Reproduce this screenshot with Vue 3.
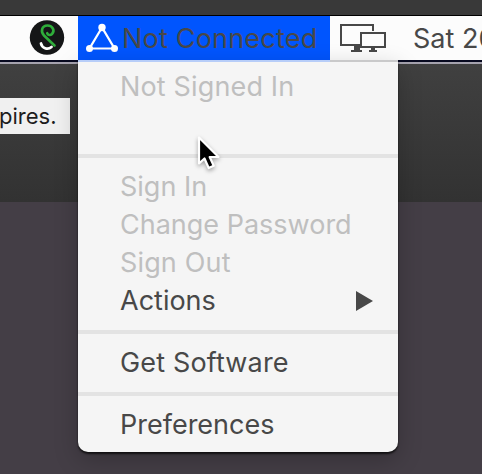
<script setup>
const groups = [
  [
    { label: 'Not Signed In', cls: 'not-signed', disabled: true },
    { label: '', cls: 'blank', disabled: true },
  ],
  [
    { label: 'Sign In', cls: 'sign-in', disabled: true },
    { label: 'Change Password', cls: 'change', disabled: true },
    { label: 'Sign Out', cls: 'sign-out', disabled: true },
    { label: 'Actions', cls: 'actions', submenu: true },
  ],
  [{ label: 'Get Software', cls: 'software' }],
  [{ label: 'Preferences', cls: 'prefs' }],
]
</script>

<template>
  <div class="screen">
    <header class="menubar">
      <svg class="snake" width="36" height="36" viewBox="0 0 36 36">
        <circle cx="18" cy="17.5" r="17.2" fill="#151617" />
        <path d="M25.500 25.500 15 15.500C11.500 12 12.500 5.500 18.500 5.500c5.500 0 7.500 5.500 4.500 8.500-1.700 1.600-4 1.300-4.800-.8" fill="none" stroke="#2fae3a" stroke-width="2.600" stroke-linecap="round" stroke-linejoin="round" />
        <path d="M12 23.500c1 4.500 6.500 7 10.500 3.500" fill="none" stroke="#fff" stroke-width="2.800" stroke-linecap="round" />
      </svg>
      <div class="status">
        <svg class="tri" width="34" height="32" viewBox="0 0 34 32">
          <path d="M17 5.500 4.500 26.500h25z" fill="none" stroke="#fff" stroke-width="2.200" />
          <circle cx="17" cy="5.500" r="3.700" fill="#fff" />
          <circle cx="4.500" cy="26.500" r="3.500" fill="#fff" />
          <circle cx="29.500" cy="26.500" r="3.500" fill="#fff" />
        </svg>
        <span class="status-text">Not Connected</span>
      </div>
      <svg class="displays" width="48" height="30" viewBox="0 0 48 30">
        <path d="M33 8V2H1v20h20M11 28h11" fill="none" stroke="#484848" stroke-width="2" />
        <path d="M14 23h6v4h-6z" fill="#484848" />
        <path d="M21 10h24v14H21zM29 28h8" fill="none" stroke="#484848" stroke-width="2" />
        <path d="M31 24h4v4h-4z" fill="#484848" />
      </svg>
      <span class="clock">Sat 20</span>
    </header>
    <div class="window">
      <div class="tooltip">pires.</div>
    </div>
    <div class="desktop"></div>

    <nav class="menu">
      <div v-for="(group, g) in groups" :key="g" class="group">
        <div v-for="item in group" :key="item.cls" class="item" :class="{ disabled: item.disabled }">
          <span :class="item.cls">{{ item.label }}</span>
          <svg v-if="item.submenu" class="arrow" width="17" height="20" viewBox="0 0 17 20">
            <path d="M0 0 17 10 0 20z" fill="#484848" />
          </svg>
        </div>
      </div>
    </nav>
    <svg class="cursor" width="26" height="38" viewBox="0 0 26 38">
      <path d="M2 2.500v26l5.500-5 4.200 9.500 5-2.200-4-8.800h8.800z" fill="#000" stroke="#fff" stroke-width="2.200" stroke-linejoin="round" />
    </svg>
  </div>
</template>

<style>
body { margin: 0; overflow: hidden; }
</style>

<style scoped>
.screen {
  position: relative;
  width: 482px;
  height: 474px;
  overflow: hidden;
  display: flex;
  flex-direction: column;
  background: #393939;
  padding-top: 15px;
  box-sizing: border-box;
  font-family: Inter, "Liberation Sans", sans-serif;
  font-size: 27px;
  color: #484848;
  white-space: nowrap;
}
.menubar {
  flex: none;
  box-sizing: border-box;
  height: 47px;
  border-top: 1px solid #000;
  border-bottom: 2px solid #080a20;
  background: #fcfcfc;
  display: flex;
  align-items: center;
}
.snake { margin-left: 29px; margin-right: 13px; flex: none; }
.status {
  box-sizing: border-box;
  width: 252px;
  height: 44px;
  flex: none;
  background: #0055fe;
  display: flex;
  align-items: center;
  padding-left: 7px;
}
.tri { flex: none; margin-right: 3px; }
.status-text { letter-spacing: 0.2px; }
.displays { margin-left: 10px; margin-right: 25px; flex: none; }
.clock { flex: none; }
.window {
  flex: none;
  box-sizing: border-box;
  height: 140px;
  border-top: 2px solid #a5a2ae;
  background: linear-gradient(#404040, #323232);
  padding-top: 34px;
}
.tooltip {
  width: 70px;
  height: 36px;
  box-sizing: border-box;
  background: #f0f0f0;
  color: #1d1d1d;
  font-size: 22px;
  line-height: 37px;
  text-indent: -1px;
}
.desktop { flex: 1; background: #443e46; }
.menu {
  position: absolute;
  left: 78px;
  top: 60px;
  width: 320px;
  height: 392px;
  box-sizing: border-box;
  padding: 8px 0;
  border-radius: 0 0 10px 10px;
  background: linear-gradient(90deg, #b7cdf8 252px, #c9c9ca 252px) top / 100% 2px no-repeat #f5f5f5;
  box-shadow: 0 2px 2px rgba(0, 0, 0, 0.7), 0 8px 24px rgba(0, 0, 0, 0.22);
}
.group + .group::before {
  content: "";
  display: block;
  height: 4px;
  margin: 10px 0;
  background: #e3e3e3;
}
.item {
  height: 38px;
  line-height: 38px;
  padding: 0 25px 0 42px;
  display: flex;
  align-items: center;
  justify-content: space-between;
}
.not-signed, .sign-out, .software { letter-spacing: 0.15px; }
.disabled { color: #bfbfbf; }
.cursor {
  position: absolute;
  left: 197px;
  top: 135px;
  filter: drop-shadow(0 2px 2px rgba(0, 0, 0, 0.35));
}
</style>
